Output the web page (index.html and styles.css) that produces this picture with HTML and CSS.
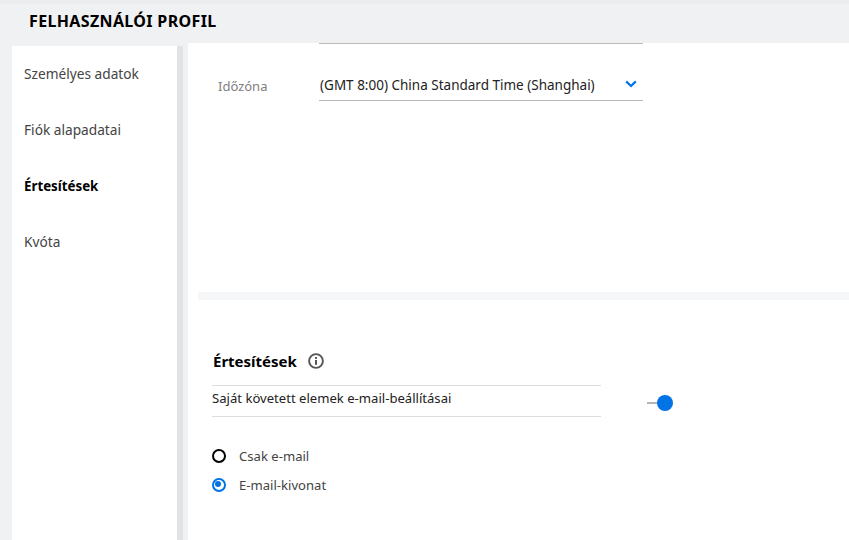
FILE: index.html
```html
<!DOCTYPE html>
<html lang="hu">
<head>
<meta charset="utf-8">
<title>Felhasználói profil</title>
<link rel="stylesheet" href="styles.css">
</head>
<body>
<div class="page">
  <header class="topbar"><h1 class="title">FELHASZNÁLÓI PROFIL</h1></header>
  <div class="body">
    <nav class="side">
      <a class="nav-item">Személyes adatok</a>
      <a class="nav-item">Fiók alapadatai</a>
      <a class="nav-item active">Értesítések</a>
      <a class="nav-item">Kvóta</a>
    </nav>
    <div class="side-scroll"></div>
    <main class="main">
      <section class="profile">
        <div class="prev-line"></div>
        <div class="field">
          <span class="field-label">Időzóna</span>
          <div class="select">
            <span>(GMT 8:00) China Standard Time (Shanghai)</span>
            <svg class="chevron" width="12" height="8" viewBox="0 0 12 8"><path d="M1.2 1.4 6 6l4.8-4.6" fill="none" stroke="#0073e7" stroke-width="2.2"/></svg>
          </div>
        </div>
      </section>
      <div class="divider"></div>
      <section class="notif">
        <h2 class="notif-title">Értesítések
          <svg class="info" width="16" height="16" viewBox="0 0 16 16"><circle cx="8" cy="8" r="6.9" fill="none" stroke="#555" stroke-width="1.9"/><rect x="7" y="7" width="2" height="4.8" fill="#555"/><rect x="7" y="4" width="2" height="1.9" fill="#555"/></svg>
        </h2>
        <div class="toggle-row">
          <div class="toggle-label">Saját követett elemek e-mail-beállításai</div>
          <div class="toggle"><span class="track"></span><span class="knob"></span></div>
        </div>
        <div class="radios">
          <label class="radio-row"><span class="radio"></span>Csak e-mail</label>
          <label class="radio-row"><span class="radio on"></span>E-mail-kivonat</label>
        </div>
      </section>
    </main>
  </div>
</div>
</body>
</html>
```
FILE: styles.css
```css
* { box-sizing: border-box; }
html, body { margin: 0; height: 100%; }
body { font-family: "Noto Sans", sans-serif; color: #333; background: #f0f1f3; overflow: hidden; }
.page { width: 849px; height: 540px; display: flex; flex-direction: column; border-top: 4px solid #ebecee; }
.topbar { height: 39px; padding-left: 29px; flex: none; }
.title { margin: 0; padding-top: 7px; font-size: 16px; line-height: 20px; font-weight: 700; color: #000; letter-spacing: 0.35px; }
.body { flex: 1; display: flex; align-items: stretch; padding-left: 12px; }
.side { width: 165px; margin-top: 3px; background: #fff; padding-top: 4px; display: flex; flex-direction: column; }
.nav-item { height: 56px; padding-left: 12px; padding-top: 14px; font-size: 13.7px; line-height: 20px; color: #444; }
.nav-item.active { font-weight: 700; color: #000; font-size: 13.3px; }
.side-scroll { width: 6px; margin-top: 3px; background: #e2e3e5; margin-right: 5px; }
.main { flex: 1; background: #fff; display: flex; flex-direction: column; }
.profile { height: 249px; padding-left: 131px; }
.prev-line { width: 324px; height: 1px; background: #bbb; }
.field { display: flex; position: relative; margin-top: 27px; }
.field-label { position: absolute; left: -101px; top: 5px; font-size: 13px; line-height: 20px; color: #808080; }
.select { width: 324px; height: 30px; border-bottom: 1px solid #bbb; display: flex; justify-content: space-between; padding: 4px 6px 0 1px; font-size: 13.5px; line-height: 20px; color: #222; }
.chevron { margin-top: 5px; }
.divider { height: 8px; margin-left: 10px; background: #f5f6f8; flex: none; }
.notif { padding: 50px 0 0 25px; }
.notif-title { margin: 0; font-size: 15px; line-height: 22px; font-weight: 700; color: #000; display: flex; align-items: center; gap: 11px; }
.toggle-row { display: flex; align-items: center; margin-top: 13px; margin-left: -1px; }
.toggle-label { width: 389px; height: 32px; border-top: 1px solid #ddd; border-bottom: 1px solid #ddd; font-size: 13.1px; line-height: 25px; color: #222; }
.toggle { position: relative; width: 26px; height: 16px; margin-left: 46px; margin-top: 4px; }
.track { position: absolute; left: 0; top: 7px; width: 14px; height: 2px; background: #b5b5b5; }
.knob { position: absolute; left: 10px; top: 0; width: 16px; height: 16px; border-radius: 50%; background: #0073e7; }
.radios { margin-top: 29px; margin-left: -1px; display: flex; flex-direction: column; gap: 9px; }
.radio-row { display: flex; align-items: center; gap: 13px; height: 20px; font-size: 13.1px; color: #444; }
.radio { width: 14px; height: 14px; border-radius: 50%; border: 2.6px solid #000; flex: none; }
.radio.on { border-color: #0073e7; position: relative; }
.radio.on::after { content: ""; position: absolute; left: 1.4px; top: 1.4px; width: 6px; height: 6px; border-radius: 50%; background: #0073e7; }
```
